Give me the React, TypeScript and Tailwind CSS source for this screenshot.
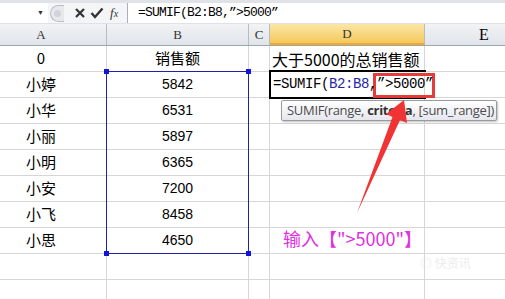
import React from "react";

const cjk = { fontFamily: '"Noto Sans CJK SC", "Liberation Sans", sans-serif' };
const mono = { fontFamily: '"Liberation Mono", "Noto Sans CJK SC", monospace' };

const rows: [string, string, string][] = [
  ["0", "销售额", "大于5000的总销售额"],
  ["小婷", "5842", ""],
  ["小华", "6531", ""],
  ["小丽", "5897", ""],
  ["小明", "6365", ""],
  ["小安", "7200", ""],
  ["小飞", "8458", ""],
  ["小思", "4650", ""],
  ["", "", ""],
  ["", "", ""],
];

function FormulaBar() {
  return (
    <div className="flex h-[24px] bg-[#dfe3e8] pt-[3px] pb-[1px]">
      <div className="flex w-[48px] items-center justify-end bg-white pr-[4px]">
        <span className="text-[7px] text-[#333]">▼</span>
      </div>
      <div className="flex w-[79px] items-center bg-[#f4f5f7]">
        <div className="ml-[2px] flex h-[17px] w-[14px] items-center justify-center rounded-l-full border border-r-0 border-[#b9bec6] bg-[#e6e8eb]">
          <div className="h-[7px] w-[7px] rounded-full bg-[#d0d4da]" />
        </div>
        <svg width="12" height="12" viewBox="0 0 12 12" className="ml-[10px]">
          <path d="M2 2 L10 10 M10 2 L2 10" stroke="#333" strokeWidth="2.2" />
        </svg>
        <svg width="14" height="12" viewBox="0 0 14 12" className="ml-[4px]">
          <path d="M1.5 6 L5 10 L12.5 1.5" stroke="#333" strokeWidth="2.4" fill="none" />
        </svg>
        <span className="ml-[6px] text-[13px] italic text-[#333]" style={{ fontFamily: '"Liberation Serif", serif' }}>
          f<span className="text-[10px]">x</span>
        </span>
      </div>
      <div className="flex flex-1 items-center border-l border-[#a9b0b9] bg-white pl-[10px]">
        <span className="text-[13px] tracking-[-0.8px] text-black" style={mono}>
          =SUMIF(B2:B8,”&gt;5000”
        </span>
      </div>
    </div>
  );
}

function HeaderRow() {
  const cell = "flex h-full items-center justify-center border-r border-[#b5bcc5] text-[13px] text-[#333]";
  const serif = { fontFamily: '"Liberation Serif", serif' };
  return (
    <div className="flex h-[22px] border-b border-[#9ea6b0] bg-gradient-to-b from-[#f1f3f5] to-[#e1e5ea]" style={serif}>
      <div className={`${cell} w-[107px] pr-[24px]`}>A</div>
      <div className={`${cell} w-[142px]`}>B</div>
      <div className={`${cell} w-[21px]`}>C</div>
      <div className={`${cell} w-[155px] border-b-2 border-b-[#f0a830] bg-gradient-to-b from-[#fbe6a4] to-[#f4c85a]`}>D</div>
      <div className="flex h-full flex-1 items-center justify-center pl-[38px]">E</div>
    </div>
  );
}

export default function App() {
  return (
    <div className="relative h-[299px] w-[505px] overflow-hidden bg-white">
      <FormulaBar />
      <HeaderRow />
      {rows.map((r, i) => (
        <div key={i} className="flex h-[26px] border-b border-[#d6d6d6] text-[15px] text-black">
          <div className="flex w-[107px] items-center justify-center border-r border-[#d6d6d6] pr-[24px]" style={cjk}>
            {r[0]}
          </div>
          <div
            className="flex w-[142px] items-center justify-center border-r border-[#d6d6d6]"
            style={i === 0 ? cjk : { fontFamily: '"Liberation Sans", sans-serif', fontSize: 14 }}
          >
            {r[1]}
          </div>
          <div className="w-[21px] border-r border-[#d6d6d6]" />
          <div className="relative flex w-[155px] items-center border-r border-[#d6d6d6] pl-[2px]">
            {i === 0 && (
              <span className="whitespace-nowrap text-[16px]" style={cjk}>
                {r[2]}
              </span>
            )}
            {i === 1 && (
              <span className="absolute left-[3px] top-[2px] z-10 whitespace-nowrap text-[14px] tracking-[-0.4px]" style={mono}>
                =SUMIF(<span className="text-[#2424a8]">B2:B8</span>,”&gt;5000”
              </span>
            )}
          </div>
          <div className="flex-1" />
        </div>
      ))}

      {/* range highlight */}
      <div className="absolute left-[106px] top-[71px] h-[183px] w-[143px] border border-[#2020a8]" />
      <div className="absolute left-[104px] top-[69px] h-[5px] w-[5px] bg-[#1414d8]" />
      <div className="absolute left-[246px] top-[69px] h-[5px] w-[5px] bg-[#1414d8]" />
      <div className="absolute left-[104px] top-[251px] h-[5px] w-[5px] bg-[#1414d8]" />
      <div className="absolute left-[246px] top-[251px] h-[5px] w-[5px] bg-[#1414d8]" />

      {/* active cell */}
      <div className="absolute left-[269px] top-[70px] h-[29px] w-[157px] border-2 border-r-0 border-black" />
      <div className="absolute left-[373px] top-[73px] h-[25px] w-[62px] border-[3px] border-[#e43b3b]" />

      {/* tooltip */}
      <div
        className="absolute left-[281px] top-[100px] flex h-[21px] w-[216px] items-center rounded-[2px] border border-[#9a9a9a] bg-gradient-to-b from-white to-[#e6e7ee] pl-[5px] text-[13px] text-[#4b4b4b] shadow-[1px_1px_2px_rgba(0,0,0,0.25)]"
        style={{ fontFamily: '"Open Sans", "Liberation Sans", sans-serif' }}
      >
        <span className="tracking-[-0.3px]">
          SUMIF(range, <b className="font-bold text-[#333]">criteria</b>, [sum_range])
        </span>
      </div>

      {/* arrow */}
      <svg className="absolute left-0 top-0" width="505" height="299" viewBox="0 0 505 299">
        <polygon points="404,100 407,123 400,120 357,213 392.5,117 386,114" fill="#f03434" />
      </svg>

      <div className="absolute left-[283px] top-[225px] whitespace-nowrap text-[18px] text-[#e030e0]" style={cjk}>
        输入【"&gt;5000"】
      </div>

      {/* watermark */}
      <div className="absolute left-[420px] top-[254px] whitespace-nowrap text-[12px] text-[#e2e2e2] opacity-60" style={cjk}>
        ◎ 快资讯
      </div>
    </div>
  );
}
